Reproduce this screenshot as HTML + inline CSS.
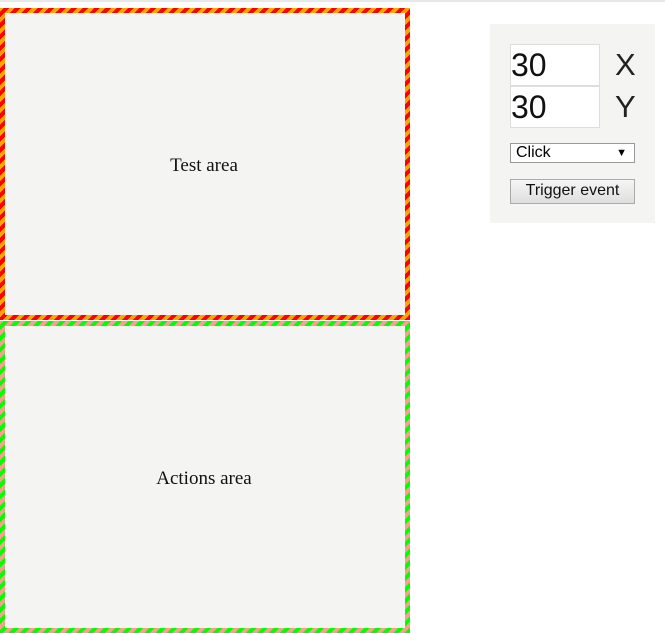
<!DOCTYPE html>
<html><head><style>
body{margin:0;width:665px;height:633px;position:relative;background:#fff;font-family:"Liberation Sans",sans-serif;overflow:hidden}
.top{position:absolute;left:0;top:0;width:665px;height:2px;background:#e8e8e8}
.box{position:absolute;left:0;width:400px;border:5px solid transparent;display:flex;align-items:center;justify-content:center;font-family:"Liberation Serif",serif;font-size:19px;color:#111;box-sizing:content-box}
.box span{position:relative;top:2px;left:-1px}
.r{top:8px;height:302px;background:linear-gradient(#f4f4f2,#f4f4f2) padding-box,repeating-linear-gradient(-45deg,#f00 0 4px,#ffa500 4px 8px) border-box}
.g{top:321px;height:302px;background:linear-gradient(#f4f4f2,#f4f4f2) padding-box,repeating-linear-gradient(-45deg,#0f0 0 4px,#f9a08a 4px 8px) border-box}
.panel{position:absolute;left:490px;top:24px;width:165px;height:199px;background:#f4f4f2}
.in{position:absolute;left:20px;background:#fff;border:1px solid #ddd;font-size:32px;line-height:40px;color:#111;box-sizing:border-box;width:90px;height:42px}
.lab{position:absolute;left:125px;font-size:31px;color:#222;line-height:42px;font-weight:300}
.sel{position:absolute;left:20px;top:119px;width:125px;height:20px;box-sizing:border-box;border:1px solid #999;background:#fff;font-size:16px;line-height:18px;padding-left:5px}
.sel span{position:absolute;right:7px;top:0;font-size:11px}
.btn{position:absolute;left:20px;top:155px;width:125px;height:25px;box-sizing:border-box;border:1px solid #aaa;background:linear-gradient(#f6f6f6,#dedede);font-size:16px;text-align:center;line-height:22px;color:#111}
</style></head><body>
<div class="top"></div>
<div class="box r"><span>Test area</span></div>
<div class="box g"><span>Actions area</span></div>
<div class="panel">
<div class="in" style="top:20px">30</div><div class="lab" style="top:20px">X</div>
<div class="in" style="top:62px">30</div><div class="lab" style="top:62px">Y</div>
<div class="sel">Click<span>▼</span></div>
<div class="btn">Trigger event</div>
</div>
</body></html>
